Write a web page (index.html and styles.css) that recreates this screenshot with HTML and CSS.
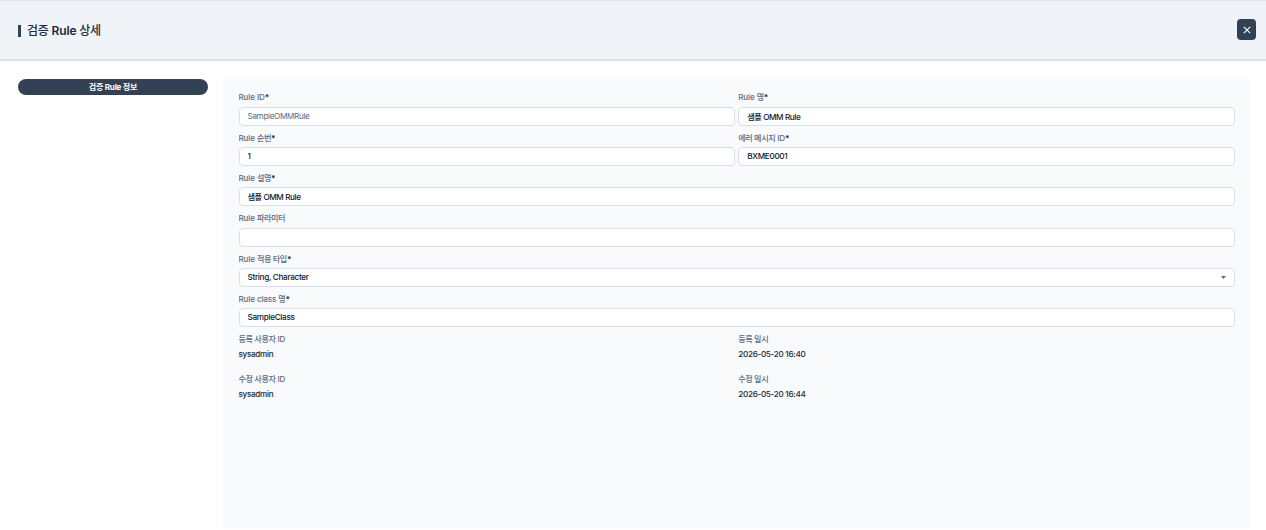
FILE: index.html
```
<!DOCTYPE html>
<html lang="ko">
<head>
    <meta charset="UTF-8">
    <meta name="viewport" content="width=device-width, initial-scale=1.0">
    <title>검증 Rule 상세</title>
    <link rel="stylesheet" href="styles.css">
</head>
<body>
    <header class="popup-header">
        <h1><i>검증</i> Rule <i>상세</i></h1>
        <button type="button" class="btn-close" aria-label="닫기">
            <svg viewBox="0 0 8 8" width="8" height="8"><path d="M0.8 0.8L7.2 7.2M7.2 0.8L0.8 7.2"/></svg>
        </button>
    </header>

    <main class="popup-body">
        <nav class="tab-list">
            <button type="button" class="tab active">검증 Rule 정보</button>
        </nav>

        <form class="panel">
            <div class="field">
                <label for="rule-id">Rule ID<b>*</b></label>
                <input id="rule-id" class="readonly" type="text" value="SampleOMMRule" readonly>
            </div>
            <div class="field">
                <label for="rule-name">Rule <i>명</i><b>*</b></label>
                <input id="rule-name" class="ko" type="text" value="샘플 OMM Rule">
            </div>
            <div class="field">
                <label for="rule-seq">Rule <i>순번</i><b>*</b></label>
                <input id="rule-seq" type="text" value="1">
            </div>
            <div class="field">
                <label for="error-id"><i>에러 메시지</i> ID<b>*</b></label>
                <input id="error-id" type="text" value="BXME0001">
            </div>
            <div class="field wide">
                <label for="rule-desc">Rule <i>설명</i><b>*</b></label>
                <input id="rule-desc" class="ko" type="text" value="샘플 OMM Rule">
            </div>
            <div class="field wide">
                <label for="rule-param">Rule <i>파라미터</i></label>
                <input id="rule-param" type="text" value="">
            </div>
            <div class="field wide">
                <label for="rule-type">Rule <i>적용 타입</i><b>*</b></label>
                <select id="rule-type">
                    <option>String, Character</option>
                </select>
            </div>
            <div class="field wide">
                <label for="rule-class">Rule class <i>명</i><b>*</b></label>
                <input id="rule-class" type="text" value="SampleClass">
            </div>
            <div class="field">
                <label><i>등록 사용자</i> ID</label>
                <p>sysadmin</p>
            </div>
            <div class="field">
                <label><i>등록 일시</i></label>
                <p>2026-05-20 16:40</p>
            </div>
            <div class="field">
                <label><i>수정 사용자</i> ID</label>
                <p>sysadmin</p>
            </div>
            <div class="field">
                <label><i>수정 일시</i></label>
                <p>2026-05-20 16:44</p>
            </div>
        </form>
    </main>
</body>
</html>
```
FILE: styles.css
```
* { box-sizing: border-box; }
body { margin: 0; height: 530px; overflow: hidden; background: #fff; color: #1e293b; font-family: Inter, "Noto Sans CJK KR", sans-serif; font-size: 8px; font-weight: 500; }
button, input, select { font: inherit; }
i { font-style: normal; }

.popup-header { display: flex; align-items: center; justify-content: space-between; height: 61px; padding: 0 10px 0 18px; background: #f0f4f9; border-top: 1px solid #e0e5e8; border-bottom: 2px solid #d5dfe9; }
.popup-header h1 { display: flex; align-items: center; margin: 2px 0 0; font-size: 12px; font-weight: 600; line-height: 18px; letter-spacing: -0.1px; white-space: pre; }
.popup-header h1::before { content: ""; width: 3px; height: 12px; margin-right: 6px; background: #334155; }
.popup-header h1 i { font-weight: 500; letter-spacing: -0.3px; }
.btn-close { display: flex; align-items: center; justify-content: center; width: 19px; height: 21px; margin-bottom: 1px; padding: 0; border: 0; border-radius: 4px; background: #334155; }
.btn-close svg { fill: none; stroke: #fff; stroke-width: 1.1; }

.popup-body { display: flex; gap: 15px; padding: 18px 16.5px 0 18px; }
.tab-list { width: 190px; }
.tab { display: block; width: 100%; height: 16px; padding: 0; border: 0; border-radius: 8px; background: #334155; color: #fff; font-weight: 700; line-height: 16px; text-align: center; letter-spacing: -0.2px; }

.panel { flex: 1; display: grid; grid-template-columns: 1fr 1fr; grid-auto-rows: 40.3px; align-content: start; column-gap: 3.5px; height: 450px; padding: 11.4px 15px 0 15.5px; background: #f8fafc; }
.field.wide { grid-column: span 2; }
.field label { display: block; height: 16.4px; overflow: hidden; color: #5b6b82; font-size: 8.1px; line-height: 14.5px; letter-spacing: -0.13px; }
.field label i { letter-spacing: -0.4px; }
.field label b { color: #1e293b; font-weight: 700; }
.field p { margin: 0; line-height: 11px; color: #1e293b; font-size: 8.2px; letter-spacing: -0.33px; }
.field input, .field select { display: block; width: 100%; height: 19px; padding: 0 8px 1px; border: 1px solid #d5e0eb; border-radius: 4px; background: #fff; color: #0f172a; font-size: 8.2px; letter-spacing: -0.33px; outline: none; }
.field input.readonly { color: #5b6b82; font-weight: 400; letter-spacing: -0.37px; }
.field input.ko { letter-spacing: -0.43px; }
.field select { appearance: none; background: #fff url("data:image/svg+xml,%3Csvg xmlns='http://www.w3.org/2000/svg' viewBox='0 0 5 3'%3E%3Cpath d='M0 0h5L2.5 3z' fill='%23666'/%3E%3C/svg%3E") no-repeat right 7.5px center / 5px 3px; }
```
